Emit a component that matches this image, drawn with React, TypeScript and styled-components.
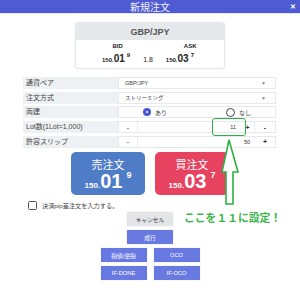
import styled, { createGlobalStyle } from "styled-components";

const Global = createGlobalStyle`
  html, body { margin: 0; padding: 0; background: #fff; }
  body {
    font-family: "Liberation Sans", "Noto Sans CJK JP", sans-serif;
    color: #333;
  }
`;

const Page = styled.div`
  position: relative;
  width: 300px;
  height: 292px;
  overflow: hidden;
  background: #fff;
`;

const Header = styled.div`
  height: 13px;
  background: #4e5bd2;
  border-bottom: 1px solid #e3e6f6;
  display: grid;
  grid-template-columns: 1fr auto 1fr;
  align-items: center;
`;

const Title = styled.div`
  grid-column: 2;
  font-family: "Noto Sans CJK JP", sans-serif;
  font-size: 10px;
  line-height: 13px;
  color: #eef0ff;
`;

const Close = styled.div`
  justify-self: end;
  margin-right: 4px;
  font-size: 7px;
  font-weight: bold;
  color: #fff;
  line-height: 7px;
`;

const Card = styled.div`
  width: 150px;
  height: 47px;
  margin: 8px auto 0;
  border: 1px solid #e5e8eb;
  border-radius: 3px;
  box-shadow: 0 0 2px rgba(0, 0, 0, 0.08);
  overflow: hidden;
  box-sizing: border-box;
`;

const CardHead = styled.div`
  height: 17px;
  background: #e6e9ec;
  display: flex;
  align-items: center;
  justify-content: center;
  font-size: 9px;
  font-weight: bold;
  color: #555;
`;

const LabelRow = styled.div`
  display: flex;
  justify-content: center;
  gap: 61px;
  padding: 3px 0 0 9px;
  font-size: 6px;
  font-weight: bold;
  line-height: 7px;
  color: #222;
`;

const PriceRow = styled.div`
  display: flex;
  justify-content: center;
  align-items: baseline;
  gap: 13px;
  margin-top: 2px;
  padding-right: 4px;
  color: #222;
`;

const Price = styled.span<{ $big?: boolean }>`
  font-weight: bold;
  white-space: nowrap;
  font-size: ${(p) => (p.$big ? "8px" : "6px")};
  b {
    font-size: ${(p) => (p.$big ? "20px" : "10px")};
  }
  sup {
    font-size: ${(p) => (p.$big ? "9px" : "6px")};
    margin-left: ${(p) => (p.$big ? "4px" : "2px")};
    vertical-align: ${(p) => (p.$big ? "10px" : "5px")};
  }
`;

const Spread = styled.span`
  font-size: 7px;
  color: #222;
`;

const Form = styled.div`
  margin: 8px 24px 0 23px;
  display: grid;
  grid-auto-rows: 12px;
  row-gap: 2.7px;
`;

const Row = styled.div`
  display: grid;
  grid-template-columns: 95px 1fr;
`;

const Label = styled.div`
  background: #eef1f4;
  font-family: "Liberation Sans", "Noto Sans CJK JP", sans-serif;
  font-size: 7px;
  line-height: 12px;
  padding-left: 3px;
  color: #444;
`;

const Value = styled.div`
  border: 1px solid #e6e8eb;
  box-sizing: border-box;
  display: flex;
  align-items: center;
  font-size: 5.5px;
  color: #444;
`;

const SelectText = styled.span`
  flex: 1;
  padding-left: 6px;
`;

const Caret = styled.span`
  width: 14px;
  font-size: 5px;
  color: #888;
`;

const RadioItem = styled.label<{ $offset: number }>`
  display: flex;
  align-items: center;
  gap: 4px;
  margin-left: ${(p) => p.$offset}px;
  font-family: "Noto Sans CJK JP", sans-serif;
  font-size: 6px;
`;

const RadioDot = styled.span<{ $on?: boolean }>`
  width: ${(p) => (p.$on ? 8 : 9)}px;
  height: ${(p) => (p.$on ? 8 : 9)}px;
  border-radius: 50%;
  box-sizing: border-box;
  border: ${(p) => (p.$on ? "3px solid #4a57d8" : "1px solid #444")};
  background: #fff;
`;

const StepCell = styled.span<{ $w: number; $bold?: boolean }>`
  width: ${(p) => p.$w}px;
  height: 100%;
  display: flex;
  align-items: center;
  justify-content: center;
  font-size: 7px;
  font-weight: ${(p) => (p.$bold ? "bold" : "normal")};
  color: #333;
  & + & {
    border-left: 1px solid #eceef0;
  }
`;

const Input = styled.span`
  flex: 1;
  height: 100%;
  border-left: 1px solid #eceef0;
  display: flex;
  align-items: center;
  justify-content: flex-end;
  padding-right: 5px;
  font-size: 5.5px;
  color: #333;
`;

const Trades = styled.div`
  display: flex;
  justify-content: center;
  gap: 10px;
  margin-top: 4.5px;
`;

const TradeButton = styled.div<{ $tone: "sell" | "buy" }>`
  width: 74px;
  height: 43px;
  border-radius: 5px;
  background: ${(p) => (p.$tone === "sell" ? "#4f7cc6" : "#e7425f")};
  color: #fff;
  display: flex;
  flex-direction: column;
  align-items: center;
`;

const TradeLabel = styled.div`
  font-family: "Noto Sans CJK JP", sans-serif;
  font-size: 11px;
  line-height: 12px;
  margin-top: 6px;
`;

const CheckRow = styled.label`
  display: flex;
  align-items: center;
  gap: 5px;
  margin: 6px 0 0 28px;
  font-family: "Liberation Sans", "Noto Sans CJK JP", sans-serif;
  font-size: 6.2px;
  color: #444;
`;

const Box = styled.span`
  width: 9px;
  height: 9px;
  box-sizing: border-box;
  border: 1px solid #555;
  border-radius: 1.5px;
`;

const Actions = styled.div`
  display: flex;
  flex-direction: column;
  align-items: center;
  gap: 4.5px;
  margin-top: 2px;
`;

const ActionPair = styled.div`
  display: flex;
  gap: 7px;
`;

const ActionButton = styled.div<{ $muted?: boolean }>`
  width: 46px;
  height: 13.5px;
  background: ${(p) => (p.$muted ? "#e3e5e8" : "#6979e2")};
  color: ${(p) => (p.$muted ? "#333" : "#fff")};
  display: flex;
  align-items: center;
  justify-content: center;
  font-family: "Liberation Sans", "Noto Sans CJK JP", sans-serif;
  font-size: 5.7px;
  box-shadow: 0 0 1px rgba(0, 0, 0, 0.2);
`;

const Highlight = styled.div`
  position: absolute;
  left: 212px;
  top: 118px;
  width: 34px;
  height: 18px;
  box-sizing: border-box;
  border: 1.8px solid #2eaf44;
  border-radius: 3px;
`;

const Arrow = styled.svg`
  position: absolute;
  left: 220px;
  top: 138px;
`;

const Note = styled.div`
  position: absolute;
  left: 184px;
  top: 211px;
  font-family: "Noto Sans CJK JP", sans-serif;
  font-weight: bold;
  font-size: 10.8px;
  line-height: 13px;
  color: #3bb44a;
  white-space: nowrap;
`;

function PriceText({ head, body, tail, big }: { head: string; body: string; tail: string; big?: boolean }) {
  return (
    <Price $big={big}>
      {head}
      <b>{body}</b>
      <sup>{tail}</sup>
    </Price>
  );
}

export default function App() {
  return (
    <Page>
      <Global />
      <Header>
        <Title>新規注文</Title>
        <Close>✕</Close>
      </Header>

      <Card>
        <CardHead>GBP/JPY</CardHead>
        <LabelRow>
          <span>BID</span>
          <span>ASK</span>
        </LabelRow>
        <PriceRow>
          <PriceText head="150." body="01" tail="9" />
          <Spread>1.8</Spread>
          <PriceText head="150." body="03" tail="7" />
        </PriceRow>
      </Card>

      <Form>
        <Row>
          <Label>通貨ペア</Label>
          <Value>
            <SelectText>GBP/JPY</SelectText>
            <Caret>▼</Caret>
          </Value>
        </Row>
        <Row>
          <Label>注文方式</Label>
          <Value>
            <SelectText>ストリーミング</SelectText>
            <Caret>▼</Caret>
          </Value>
        </Row>
        <Row>
          <Label>両建</Label>
          <Value>
            <RadioItem $offset={24}>
              <RadioDot $on />
              あり
            </RadioItem>
            <RadioItem $offset={59}>
              <RadioDot />
              なし
            </RadioItem>
          </Value>
        </Row>
        <Row>
          <Label>Lot数(1Lot=1,000)</Label>
          <Value>
            <StepCell $w={18}>-</StepCell>
            <Input>11</Input>
            <StepCell $w={13} $bold>+</StepCell>
            <StepCell $w={20} $bold>-</StepCell>
          </Value>
        </Row>
        <Row>
          <Label>許容スリップ</Label>
          <Value>
            <StepCell $w={18}>-</StepCell>
            <Input>50</Input>
            <StepCell $w={20} $bold>+</StepCell>
          </Value>
        </Row>
      </Form>

      <Trades>
        <TradeButton $tone="sell">
          <TradeLabel>売注文</TradeLabel>
          <PriceText head="150." body="01" tail="9" big />
        </TradeButton>
        <TradeButton $tone="buy">
          <TradeLabel>買注文</TradeLabel>
          <PriceText head="150." body="03" tail="7" big />
        </TradeButton>
      </Trades>

      <CheckRow>
        <Box />
        決済pip差注文を入力する。
      </CheckRow>

      <Actions>
        <ActionButton $muted>キャンセル</ActionButton>
        <ActionButton>成行</ActionButton>
        <ActionPair>
          <ActionButton>指値/逆指</ActionButton>
          <ActionButton>OCO</ActionButton>
        </ActionPair>
        <ActionPair>
          <ActionButton>IF-DONE</ActionButton>
          <ActionButton>IF-OCO</ActionButton>
        </ActionPair>
      </Actions>

      <Highlight />
      <Arrow width="20" height="70" viewBox="0 0 20 70">
        <path
          d="M9 2 L2 34 L6 34 L6 66 L13 66 L13 34 L18 34 Z"
          fill="#fff"
          stroke="#2eaf44"
          strokeWidth="1.6"
          strokeLinejoin="miter"
        />
      </Arrow>
      <Note>ここを１１に設定！</Note>
    </Page>
  );
}
